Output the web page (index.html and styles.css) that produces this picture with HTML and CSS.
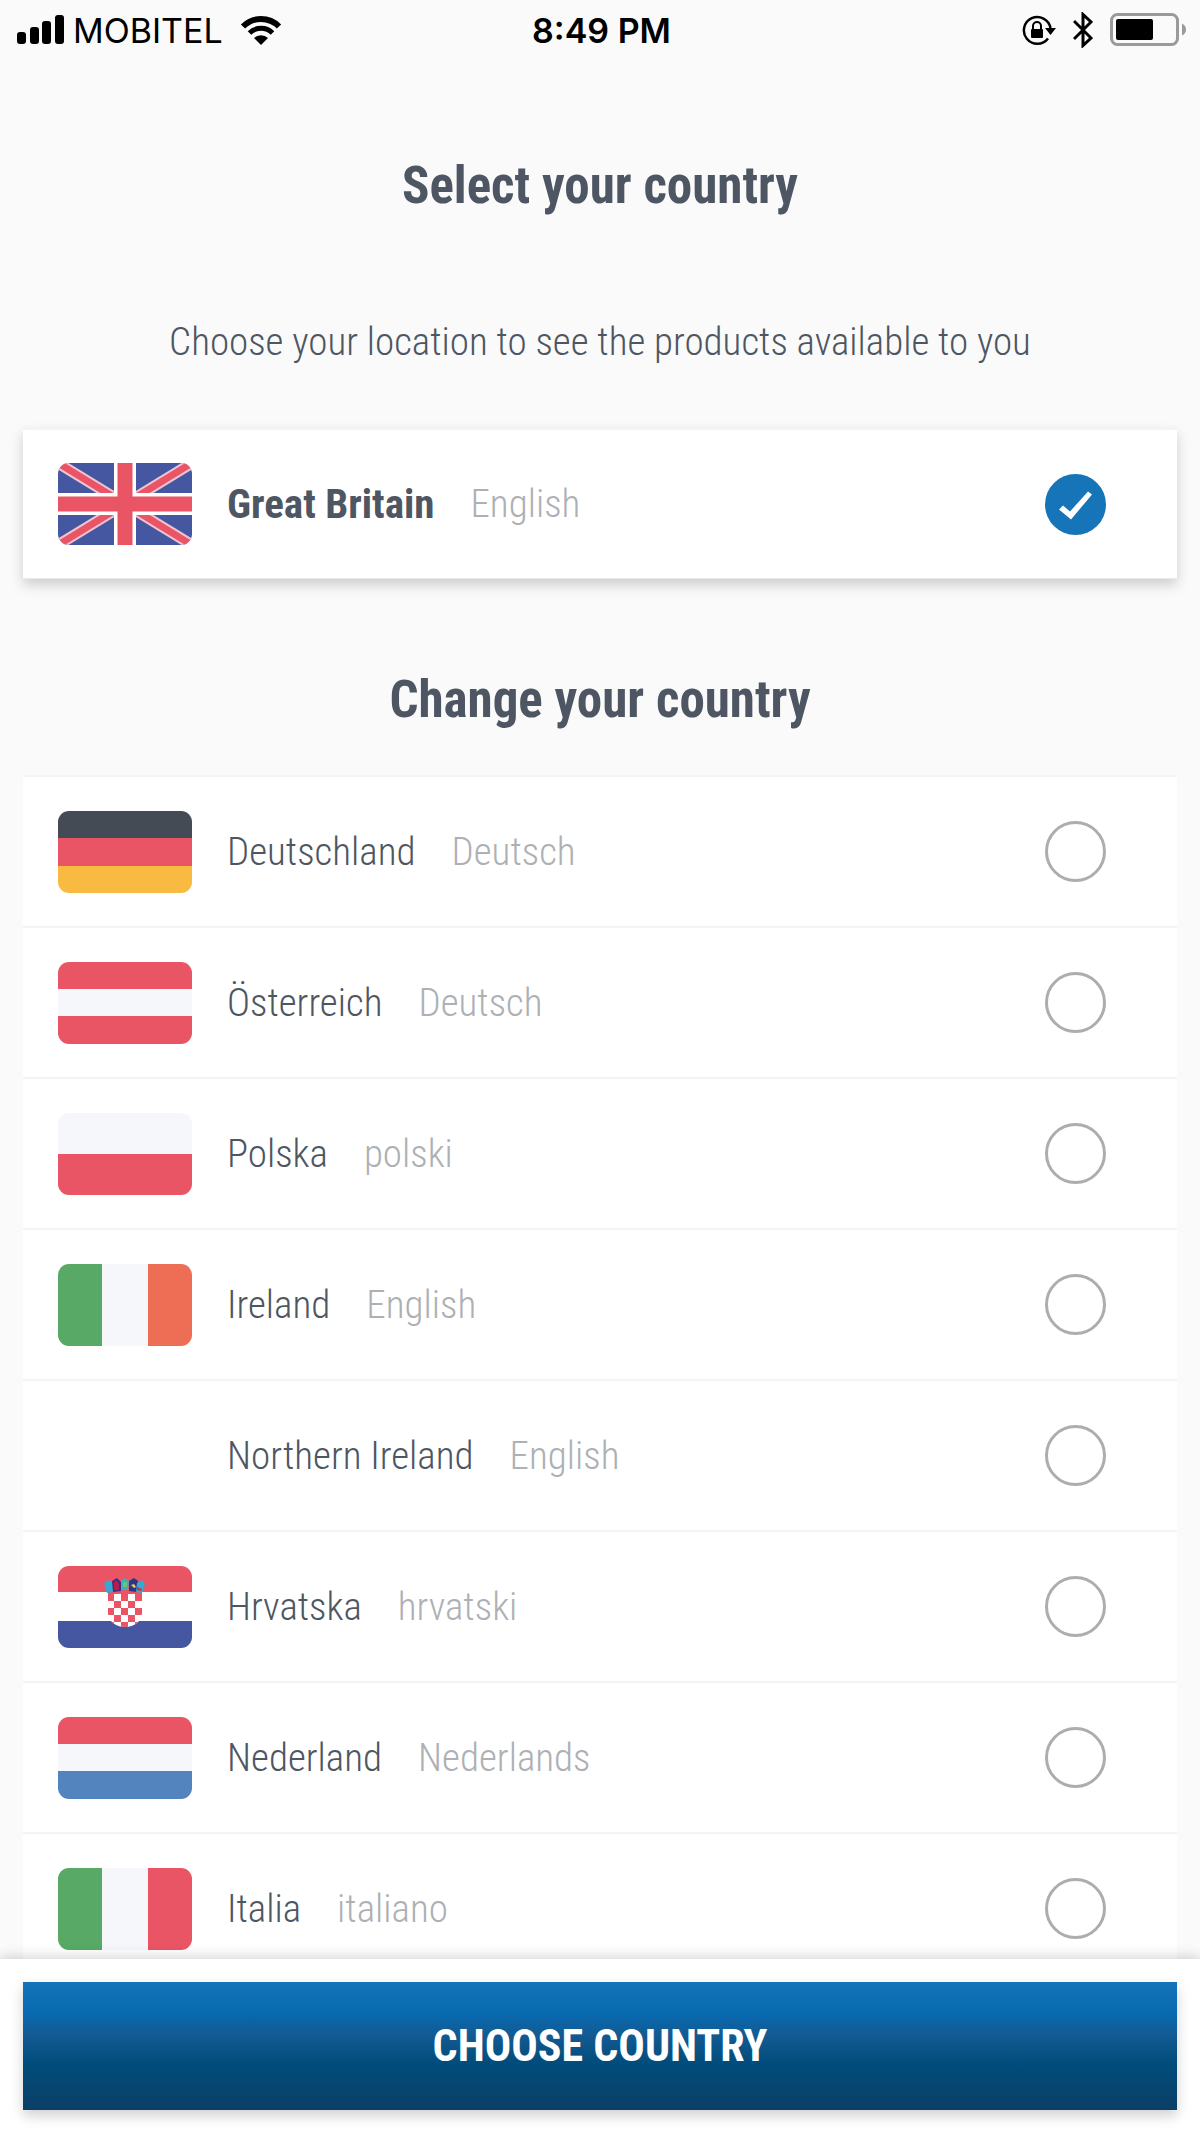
FILE: index.html
```html
<!DOCTYPE html>
<html lang="en">
<head>
  <meta charset="UTF-8" />
  <meta name="viewport" content="width=device-width, initial-scale=1.0"/>
  <title>Select your country</title>
  <link rel="stylesheet" href="styles.css">
</head>
<body>

  <header class="status-bar">
    <div class="status-left">
      <svg class="signal" width="48" height="30" viewBox="0 0 48 30">
        <rect x="0" y="17" width="9" height="12" rx="3"/>
        <rect x="13" y="12" width="9" height="17" rx="3"/>
        <rect x="25" y="6" width="9" height="23" rx="3"/>
        <rect x="38" y="0" width="9" height="29" rx="3"/>
      </svg>
      <span class="carrier">MOBITEL</span>
      <svg class="wifi" width="42" height="30" viewBox="0 0 42 30">
        <path d="M3 11.500a25.500 25.500 0 0 1 36 0" fill="none" stroke="#000" stroke-width="6"/>
        <path d="M9.500 18a16.300 16.300 0 0 1 23 0" fill="none" stroke="#000" stroke-width="5"/>
        <path d="M21 30l-7-7a10 10 0 0 1 14 0z"/>
      </svg>
    </div>
    <span class="time">8:49 PM</span>
    <div class="status-right">
      <svg width="34" height="32" viewBox="0 0 34 32">
        <path d="M26 24.500A13.400 13.400 0 1 1 28.500 14" fill="none" stroke="#000" stroke-width="2.500"/>
        <path d="M23 14h11l-5.500 7z"/>
        <rect x="9" y="15" width="12" height="9" rx="1"/>
        <path d="M11 16v-4a4 4 0 0 1 8 0v4" fill="none" stroke="#000" stroke-width="2"/>
      </svg>
      <svg width="20" height="36" viewBox="0 0 20 36">
        <path d="M1 9l17 17-8 7.500V2.500L18 10 1 27" fill="none" stroke="#000" stroke-width="3"/>
      </svg>
      <svg width="76" height="34" viewBox="0 0 76 34">
        <rect x="1.500" y="1.500" width="66" height="30" rx="6" fill="none" stroke="#9a9a9a" stroke-width="3"/>
        <rect x="6" y="6" width="37" height="21" rx="2"/>
        <path d="M72 10.500q4 2 4 6t-4 6z" fill="#9a9a9a"/>
      </svg>
    </div>
  </header>

  <form id="countryForm">
    <main>
      <h1>Select your country</h1>
      <p class="intro">Choose your location to see the products available to you</p>

      <label class="country selected">
        <svg class="flag" viewBox="0 0 134 82">
          <rect width="134" height="82" fill="#4557a0"/>
          <path d="M0 0l134 82M134 0L0 82" stroke="#f0c3d2" stroke-width="11"/>
          <path d="M0 0l134 82M134 0L0 82" stroke="#e95565" stroke-width="7"/>
          <path d="M67 0v82M0 41h134" stroke="#fff" stroke-width="22"/>
          <path d="M67 0v82M0 41h134" stroke="#e95565" stroke-width="15"/>
        </svg>
        <span class="name">Great Britain</span>
        <span class="language">English</span>
        <input type="radio" name="country" value="gb" checked>
      </label>

      <h2>Change your country</h2>

      <div class="country-list">
        <label class="country">
          <svg class="flag" viewBox="0 0 134 82">
            <rect width="134" height="28" fill="#454b55"/>
            <rect y="27" width="134" height="28" fill="#e95565"/>
            <rect y="55" width="134" height="27" fill="#f9ba42"/>
          </svg>
          <span class="name">Deutschland</span>
          <span class="language">Deutsch</span>
          <input type="radio" name="country" value="de">
        </label>
        <label class="country">
          <svg class="flag" viewBox="0 0 134 82">
            <rect width="134" height="82" fill="#e95565"/>
            <rect y="27" width="134" height="27" fill="#f5f7fb"/>
          </svg>
          <span class="name">Österreich</span>
          <span class="language">Deutsch</span>
          <input type="radio" name="country" value="at">
        </label>
        <label class="country">
          <svg class="flag" viewBox="0 0 134 82">
            <rect width="134" height="41" fill="#f5f7fb"/>
            <rect y="41" width="134" height="41" fill="#e95565"/>
          </svg>
          <span class="name">Polska</span>
          <span class="language">polski</span>
          <input type="radio" name="country" value="pl">
        </label>
        <label class="country">
          <svg class="flag" viewBox="0 0 134 82">
            <rect width="44" height="82" fill="#57a965"/>
            <rect x="44" width="46" height="82" fill="#f5f7fb"/>
            <rect x="90" width="44" height="82" fill="#ee6e55"/>
          </svg>
          <span class="name">Ireland</span>
          <span class="language">English</span>
          <input type="radio" name="country" value="ie">
        </label>
        <label class="country">
          <!-- no flag for this one -->
          <span class="flag"></span>
          <span class="name">Northern Ireland</span>
          <span class="language">English</span>
          <input type="radio" name="country" value="ni">
        </label>
        <label class="country">
          <svg class="flag" viewBox="0 0 134 82">
            <rect width="134" height="27" fill="#e95565"/>
            <rect y="26" width="134" height="30" fill="#fff"/>
            <rect y="55" width="134" height="27" fill="#4557a0"/>
            <clipPath id="shield"><path d="M50 25h34v22a17 14 0 0 1-34 0z"/></clipPath>
            <g clip-path="url(#shield)">
              <rect x="49" y="25" width="35" height="37" fill="#fff"/>
              <path d="M49 31.500h35M49 45.500h35M49 59.500h35" stroke="#e95565" stroke-width="7" stroke-dasharray="7 7"/>
              <path d="M56 38.500h28M56 52.500h28" stroke="#e95565" stroke-width="7" stroke-dasharray="7 7"/>
              <path d="M49 26.500h35" stroke="#e95565" stroke-width="3"/>
            </g>
            <path d="M46 17l5-3 5 4-1 8-6 1z" fill="#35a9d4"/>
            <path d="M54 15l5-3 4 4v9l-8 1z" fill="#4b2a7b"/>
            <path d="M56 16l3-1 2 3v6h-5z" fill="#b51e4c"/>
            <path d="M63 15l4-3 4 3-1 9h-7z" fill="#2eb5bd"/>
            <path d="M65 16h4v5h-4z" fill="#6cc17b"/>
            <path d="M71 15l5-3 4 3-1 11-8-1z" fill="#31347f"/>
            <path d="M73 19l3-1 2 3-2 1z" fill="#f2c94c"/>
            <path d="M79 17l5-3 3 4-3 9-6-1z" fill="#35a9d4"/>
            <path d="M79 21l5 2-1 2-4-1z" fill="#c8324c"/>
          </svg>
          <span class="name">Hrvatska</span>
          <span class="language">hrvatski</span>
          <input type="radio" name="country" value="hr">
        </label>
        <label class="country">
          <svg class="flag" viewBox="0 0 134 82">
            <rect width="134" height="28" fill="#e95565"/>
            <rect y="27" width="134" height="28" fill="#f5f7fb"/>
            <rect y="54" width="134" height="28" fill="#5384be"/>
          </svg>
          <span class="name">Nederland</span>
          <span class="language">Nederlands</span>
          <input type="radio" name="country" value="nl">
        </label>
        <label class="country">
          <svg class="flag" viewBox="0 0 134 82">
            <rect width="44" height="82" fill="#57a965"/>
            <rect x="44" width="46" height="82" fill="#f5f7fb"/>
            <rect x="90" width="44" height="82" fill="#e95565"/>
          </svg>
          <span class="name">Italia</span>
          <span class="language">italiano</span>
          <input type="radio" name="country" value="it">
        </label>
      </div>
    </main>

    <footer class="action-bar">
      <button type="submit">CHOOSE COUNTRY</button>
    </footer>
  </form>

</body>
</html>
```
FILE: styles.css
```css
* {
  box-sizing: border-box;
}

body {
  margin: 0;
  height: 100vh;
  display: flex;
  flex-direction: column;
  font-family: 'Roboto Condensed', Roboto, sans-serif;
  background: #fafafa;
  color: #4d5662;
}

.status-bar {
  display: grid;
  grid-template-columns: 1fr auto 1fr;
  align-items: center;
  flex-shrink: 0;
  height: 60px;
  padding: 0 14px 0 17px;
  font-family: Inter, sans-serif;
  font-size: 34px;
  color: #000;
}

.status-left,
.status-right {
  display: flex;
  align-items: center;
}

.signal {
  margin-right: 8px;
}

.wifi {
  margin-left: 17px;
}

.status-right {
  justify-content: flex-end;
  gap: 17px;
}

.time {
  font-weight: 600;
}

form {
  flex: 1;
  min-height: 0;
  display: flex;
  flex-direction: column;
}

main {
  flex: 1;
  min-height: 0;
  overflow-y: auto;
  scrollbar-width: none;
  padding: 96px 23px 0;
}

h1, h2 {
  margin: 0;
  font-size: 51px;
  line-height: 60px;
  font-weight: 700;
  text-align: center;
}

.intro {
  margin: 101px 0 61px;
  font-size: 39px;
  line-height: 50px;
  font-weight: 300;
  text-align: center;
}

h2 {
  margin: 91px 0 45px;
}

.country {
  display: flex;
  align-items: center;
  height: 151px;
  padding: 0 71px 0 35px;
  background: #fff;
  border-top: 2px solid #f2f4f5;
  font-size: 39px;
  font-weight: 300;
  cursor: pointer;
}

.selected {
  border-bottom: 1px solid #e6ebee;
  box-shadow: 0 6px 12px rgba(0, 0, 0, 0.18);
}

.selected .name {
  font-size: 41px;
  font-weight: 700;
}

.flag {
  width: 134px;
  height: 82px;
  margin-right: 35px;
  border-radius: 11px;
}

.language {
  margin-left: 36px;
  color: #adb0b4;
}

.country input {
  appearance: none;
  width: 61px;
  height: 61px;
  margin: 0 0 0 auto;
  border: 3px solid #abadb0;
  border-radius: 50%;
  cursor: pointer;
}

.country input:checked {
  border: none;
  background: #1674b9;
}

/* tick inside the checked radio */
.country input:checked::after {
  content: "";
  display: block;
  height: 61px;
  background: #fff;
  clip-path: polygon(14px 36px, 18px 32px, 25px 38px, 43px 18px, 47px 21px, 26px 46px);
}

.action-bar {
  z-index: 1;
  padding: 23px;
  background: #fff;
  box-shadow: 0 -2px 12px rgba(0, 0, 0, 0.18);
}

button {
  display: block;
  width: 100%;
  height: 128px;
  border: none;
  background: linear-gradient(#1674b9, #076ab0 24%, #135a92 42%, #004c7a 64%, #0b3f67);
  box-shadow: 0 6px 12px rgba(0, 0, 0, 0.18);
  color: white;
  font-family: inherit;
  font-size: 44px;
  font-weight: 700;
  cursor: pointer;
}
```
